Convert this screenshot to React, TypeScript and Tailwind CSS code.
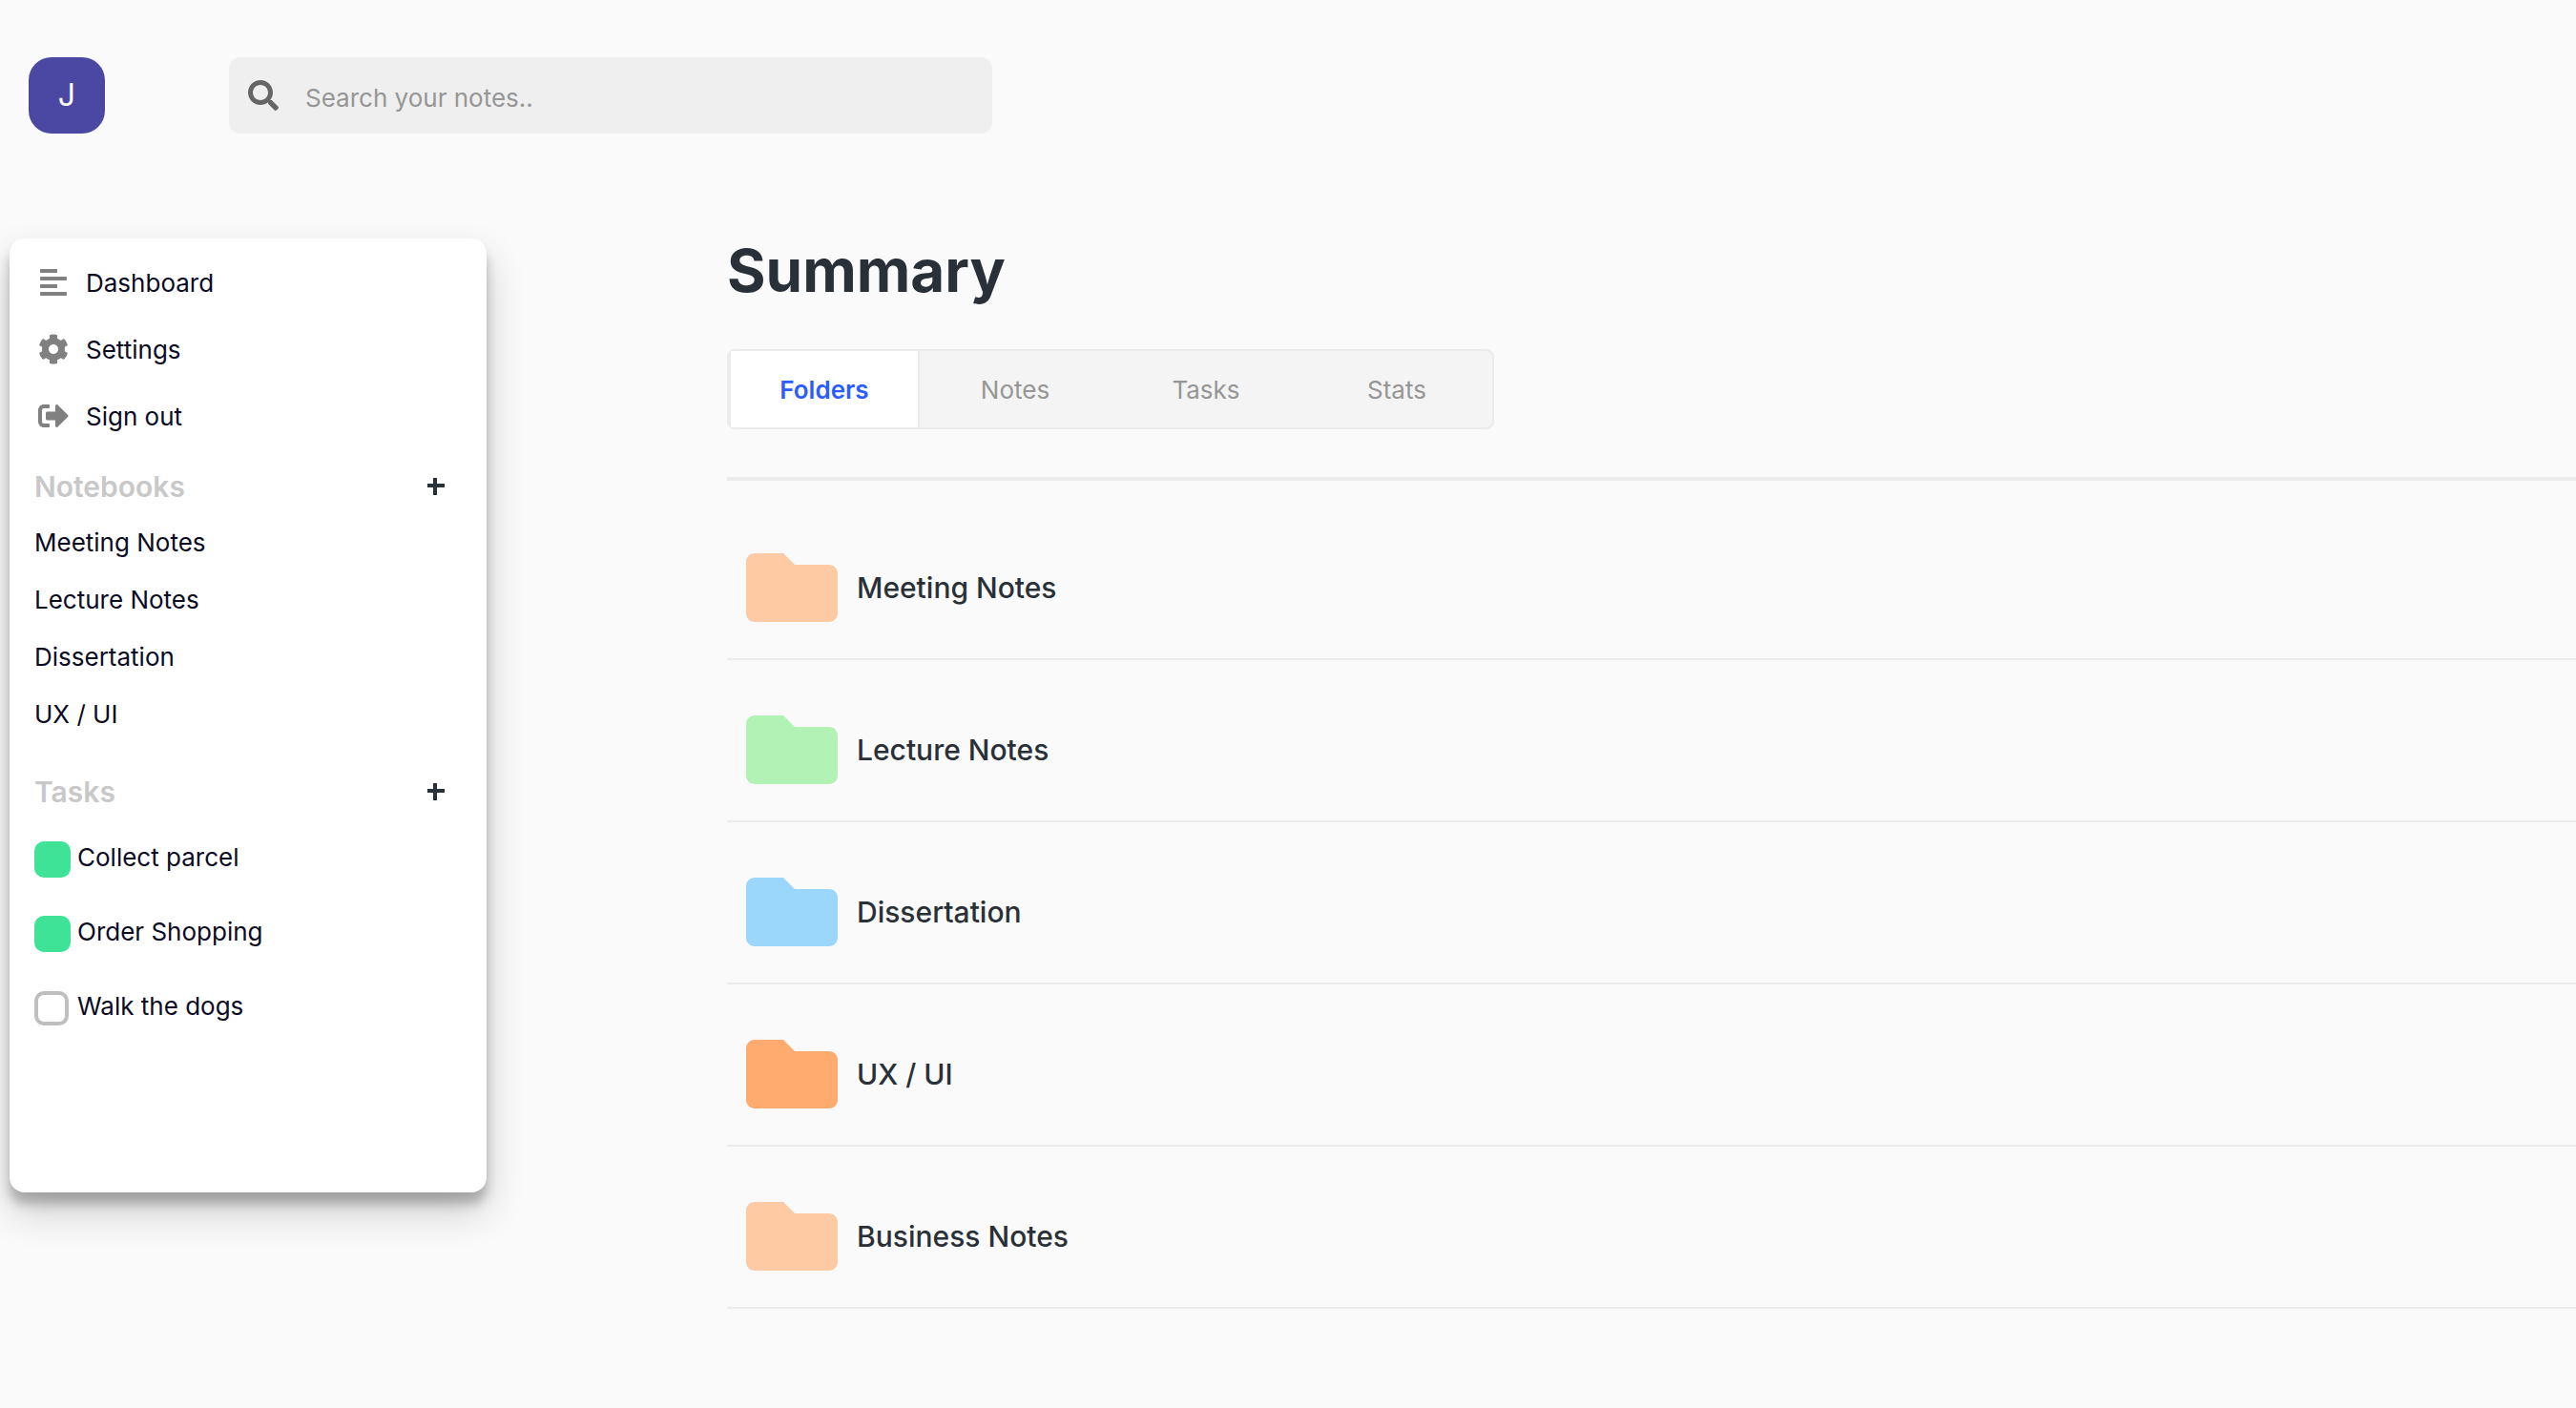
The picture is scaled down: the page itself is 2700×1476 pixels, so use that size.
import { useState } from "react";
import { FaAlignLeft, FaCog, FaFolder, FaSearch, FaSignOutAlt } from "react-icons/fa";

const links = [
  { label: "Dashboard", Icon: FaAlignLeft },
  { label: "Settings", Icon: FaCog },
  { label: "Sign out", Icon: FaSignOutAlt },
];

const notebooks = ["Meeting Notes", "Lecture Notes", "Dissertation", "UX / UI"];

const initialTasks = [
  { label: "Collect parcel", done: true },
  { label: "Order Shopping", done: true },
  { label: "Walk the dogs", done: false },
];

const tabs = ["Folders", "Notes", "Tasks", "Stats"];

const folders = [
  { label: "Meeting Notes", color: "text-[#fecaa3]" },
  { label: "Lecture Notes", color: "text-[#b2f2b4]" },
  { label: "Dissertation", color: "text-[#9bd6fb]" },
  { label: "UX / UI", color: "text-[#ffaa6e]" },
  { label: "Business Notes", color: "text-[#fecaa3]" },
];

function SectionHeading({ title, action }: { title: string; action: string }) {
  return (
    <div className="flex h-10 items-center justify-between pr-11">
      <h2 className="text-[30px] font-semibold text-[#c8c8c8]">{title}</h2>
      <button type="button" aria-label={action} className="text-[#2a3037]">
        <svg viewBox="0 0 18 18" className="size-[18px]" fill="currentColor" aria-hidden="true">
          <path d="M6 0h4v6h8v4h-8v8H6v-8H0V6h6z" />
        </svg>
      </button>
    </div>
  );
}

function Sidebar() {
  const [tasks, setTasks] = useState(initialTasks);
  const toggle = (index: number) =>
    setTasks(tasks.map((task, i) => (i === index ? { ...task, done: !task.done } : task)));

  return (
    <aside className="w-[500px] shrink-0 self-start rounded-2xl bg-white pt-[11px] pb-[174px] pl-[26px] text-[26px] text-[#0b0b23] shadow-[0_20px_40px_rgba(0,0,0,0.19),0_12px_12px_rgba(0,0,0,0.23)]">
      <nav className="pl-1">
        {links.map(({ label, Icon }) => (
          <a key={label} href="#" className="flex h-[70px] items-center gap-[18px]">
            <Icon className="size-8 text-[#808080]" />
            {label}
          </a>
        ))}
      </nav>
      <section className="mt-[19px]">
        <SectionHeading title="Notebooks" action="Add notebook" />
        <ul className="mt-2">
          {notebooks.map((name) => (
            <li key={name}>
              <a href="#" className="flex h-[60px] items-center">
                {name}
              </a>
            </li>
          ))}
        </ul>
      </section>
      <section className="mt-8">
        <SectionHeading title="Tasks" action="Add task" />
        <ul className="mt-8 flex flex-col gap-10">
          {tasks.map((task, index) => (
            <li key={task.label}>
              <label className="flex h-[38px] items-center">
                <span className="flex w-[45px] items-center">
                  <input
                    type="checkbox"
                    checked={task.done}
                    onChange={() => toggle(index)}
                    className="size-9 appearance-none rounded-[10px] border-4 border-[#bfbfbf] bg-white checked:size-[38px] checked:border-[#3ee398] checked:bg-[#3ee398]"
                  />
                </span>
                <span className="pb-1.5">{task.label}</span>
              </label>
            </li>
          ))}
        </ul>
      </section>
    </aside>
  );
}

function Summary() {
  const [active, setActive] = useState("Folders");
  return (
    <main className="min-w-0 flex-1">
      <h1 className="text-[62px] leading-[68px] font-bold text-[#2a3037]">Summary</h1>
      <div role="tablist" className="mt-12 flex w-fit rounded-lg border-2 border-[#ebebeb] bg-[#f4f4f4] text-[26px]">
        {tabs.map((tab) => (
          <button
            key={tab}
            type="button"
            role="tab"
            aria-selected={tab === active}
            onClick={() => setActive(tab)}
            className="h-20 w-[200px] border-x-2 border-transparent text-[#969696] aria-selected:border-[#ebebeb] aria-selected:bg-white aria-selected:font-semibold aria-selected:text-[#2b5cff]"
          >
            {tab}
          </button>
        ))}
      </div>
      <ul className="mt-[50px] border-t-4 border-[#ebebeb] pt-[18px]">
        {folders.map(({ label, color }) => (
          <li key={label} className="border-b-2 border-[#ebebeb]">
            <a
              href="#"
              className="flex items-center gap-5 pt-[46px] pb-[26px] pl-5 text-[30px] font-medium text-[#2a3037]"
            >
              <FaFolder className={`size-24 ${color}`} />
              {label}
            </a>
          </li>
        ))}
      </ul>
    </main>
  );
}

export default function App() {
  return (
    <div className="min-h-screen bg-[#fafafa] font-['Inter','Liberation_Sans',sans-serif]">
      <header className="flex items-center gap-[130px] px-[30px] pt-[60px]">
        <button
          type="button"
          aria-label="Account J"
          className="flex size-20 items-center justify-center rounded-3xl bg-[#4b48a3] text-[32px] text-white"
        >
          J
        </button>
        <label className="flex h-20 w-[800px] items-center gap-7 rounded-xl bg-[#efefef] px-5">
          <FaSearch className="size-8 shrink-0 text-[#666666]" />
          <input
            type="search"
            aria-label="Search your notes"
            placeholder="Search your notes.."
            className="min-w-0 flex-1 bg-transparent pt-1 text-[26px] outline-none placeholder:text-[#969696]"
          />
        </label>
      </header>
      <div className="flex gap-[252px] pt-[110px] pl-2.5">
        <Sidebar />
        <Summary />
      </div>
    </div>
  );
}
